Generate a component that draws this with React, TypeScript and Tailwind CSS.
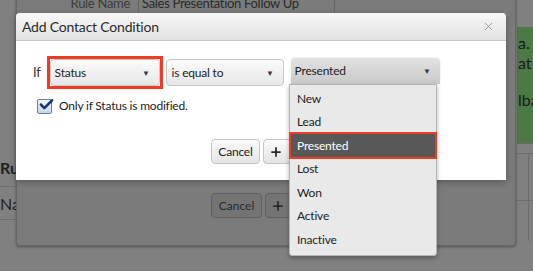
import { Check, Plus, X } from 'lucide-react';

const font = { fontFamily: 'Lato, "Open Sans", sans-serif' };

const options = ['New', 'Lead', 'Presented', 'Lost', 'Won', 'Active', 'Inactive'];

const Caret = () => <span className="text-[8px] leading-none text-[#3e3e3e]">▼</span>;

export default function App() {
  return (
    <div className="relative h-[271px] w-[533px] overflow-hidden bg-[#808080] text-[#222]" style={font}>
      {/* page behind, dimmed */}
      <div className="absolute left-0 top-[150px] w-[16px] overflow-hidden text-[16px] text-[#1f1f1f]">
        <div className="h-[37px] whitespace-nowrap border-b border-[#6e6e6e] pt-[6px] font-bold">Ru</div>
        <div className="h-[33px] whitespace-nowrap border-b border-[#6e6e6e] pt-[5px]">Na</div>
      </div>
      <div className="absolute left-[517px] top-[27px] flex h-[116px] w-[16px] flex-col overflow-hidden whitespace-nowrap bg-[#4d7946] pl-[1px] pt-[6px] text-[16px] leading-[20px] text-[#1a1a1a]">
        <span>a. T</span>
        <span>at w</span>
        <span className="mt-[17px]">lba</span>
      </div>
      <div className="absolute left-[517px] top-[143px] grid h-[97px] w-[30px] grid-cols-[12px_18px] grid-rows-[10px_47px_40px] border-t border-[#6a6a6a]">
        <div className="col-span-2 border-b border-[#6e6e6e]" />
        <div className="border-b border-r border-[#6e6e6e]" />
        <div className="border-b border-[#6e6e6e]" />
        <div className="border-r border-[#6e6e6e]" />
        <div />
      </div>

      {/* underlying dialog */}
      <div className="absolute left-[16px] top-[-8px] flex h-[254px] w-[500px] flex-col rounded-b-[4px] border border-[#666] bg-[#7b7b7b] shadow-[0_1px_3px_rgba(0,0,0,0.35)]">
        <div className="flex h-[21px] text-[13px] leading-[21px] tracking-[-0.3px] text-[#2a2a2a]">
          <div className="w-[122px] border-r border-[#666] pr-[8px] text-right text-[#3a3a3a]">Rule Name</div>
          <div className="w-[196px] border-r border-[#666] pl-[3px]">Sales Presentation Follow Up</div>
        </div>
        <div className="mt-auto mb-[27px] flex gap-[3px] pl-[194px]">
          <div className="flex h-[25px] w-[51px] items-center justify-center rounded-[4px] border border-[#606060] bg-[#747474] text-[12px] text-[#2a2a2a]">Cancel</div>
          <div className="flex h-[25px] w-[40px] items-center rounded-[4px] border border-[#606060] bg-[#747474] pl-[5px]">
            <Plus size={14} strokeWidth={3} className="text-[#2a2a2a]" />
          </div>
        </div>
      </div>

      {/* modal */}
      <div className="absolute left-[16px] top-[13px] flex h-[167px] w-[490px] flex-col overflow-hidden rounded-t-[4px] bg-white shadow-[0_2px_6px_rgba(0,0,0,0.3)]">
        <div className="flex h-[28px] items-center justify-between border-b border-[#c9c9c9] bg-gradient-to-b from-[#f7f7f7] to-[#e3e3e3] pl-[6px] pr-[11px]">
          <span className="text-[14px] tracking-[-0.2px] text-[#2b2b2b]">Add Contact Condition</span>
          <X size={13} strokeWidth={1.5} className="text-[#8a8a8a]" />
        </div>
        <div className="flex flex-col pl-[17px] pt-[15px] text-[12px] tracking-[-0.2px]">
          <div className="flex items-center">
            <span className="mr-[6px] text-[13px] text-[#333]">If</span>
            <div className="border-[3px] border-[#f03a26] p-0">
              <div className="flex h-[27px] w-[110px] items-center justify-between rounded-[4px] border border-[#c8c8c8] bg-gradient-to-b from-[#fbfbfb] to-[#e7e7e7] pl-[4px] pr-[9px]">
                Status
                <Caret />
              </div>
            </div>
            <div className="ml-[3px] flex h-[27px] w-[118px] items-center justify-between rounded-[4px] border border-[#c8c8c8] bg-gradient-to-b from-[#fbfbfb] to-[#e7e7e7] pl-[5px] pr-[9px]">
              is equal to
              <Caret />
            </div>
            <div className="ml-[7px] mt-[-3px] flex h-[26px] w-[149px] items-center justify-between rounded-t-[4px] bg-gradient-to-b from-[#e2e2e2] to-[#c9c9c9] pl-[4px] pr-[9px] shadow-[0_0_2px_rgba(0,0,0,0.15)]">
              Presented
              <Caret />
            </div>
          </div>
          <div className="mt-[8px] flex items-center gap-[7px] pl-[4px]">
            <div className="flex h-[15px] w-[15px] items-center justify-center rounded-[2px] border border-[#6b7f99] bg-gradient-to-b from-[#f4f7fb] to-[#c8d6e8]">
              <Check size={17} strokeWidth={3.5} className="mt-[-4px] ml-[3px] shrink-0 text-[#123a6e]" />
            </div>
            <span className="text-[#222]">Only if Status is modified.</span>
          </div>
          <div className="mt-[24px] flex gap-[3px] pl-[178px]">
            <div className="flex h-[25px] w-[49px] items-center justify-center rounded-[4px] border border-[#c4c4c4] bg-gradient-to-b from-[#fbfbfb] to-[#e4e4e4]">Cancel</div>
            <div className="flex h-[25px] w-[40px] items-center rounded-[4px] border border-[#c4c4c4] bg-gradient-to-b from-[#fbfbfb] to-[#e4e4e4] pl-[5px]">
              <Plus size={14} strokeWidth={3} className="text-[#2a2a2a]" />
            </div>
          </div>
        </div>
      </div>

      {/* open dropdown */}
      <div className="absolute left-[289px] top-[84px] flex w-[148px] flex-col rounded-b-[3px] border border-[#b5b5b5] bg-[#e9e9e9] pb-[3px] pt-[2px] text-[12px] tracking-[-0.2px] shadow-[0_2px_4px_rgba(0,0,0,0.3)]">
        {options.map((o) =>
          o === 'Presented' ? (
            <div key={o} className="relative flex h-[23.5px] items-center bg-[#585858] pl-[7px] text-white">
              {o}
              <div className="absolute inset-x-[-1px] bottom-[-1px] top-[-2px] border-[2px] border-[#f03a26]" />
            </div>
          ) : (
            <div key={o} className="flex h-[23.5px] items-center pl-[7px] text-[#222]">
              {o}
            </div>
          )
        )}
      </div>
    </div>
  );
}
